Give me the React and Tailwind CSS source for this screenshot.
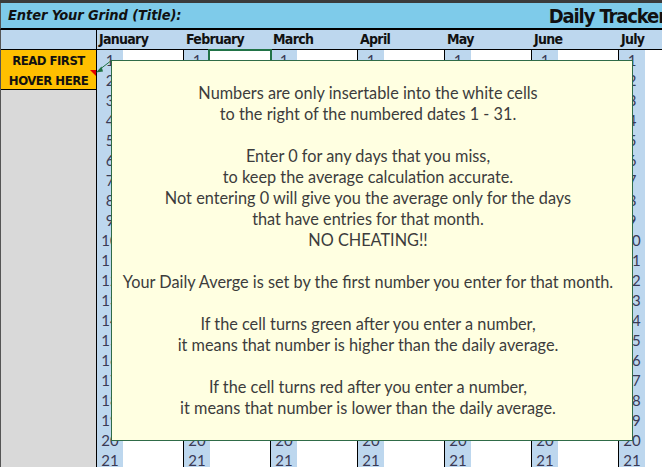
import React from 'react';

const months = ['January', 'February', 'March', 'April', 'May', 'June', 'July'];
const days = Array.from({ length: 31 }, (_, i) => i + 1);

const condensed = { fontFamily: '"DejaVu Sans Condensed", "Liberation Sans", sans-serif' };

function MonthColumn({ name, first }) {
  return (
    <div className={`flex flex-col shrink-0 ${first ? 'w-[86px]' : 'w-[87px]'}`}>
      <div
        className={`h-[20px] bg-[#bdd7ee] border-b border-black text-[14px] font-bold leading-[19px] text-[#111] tracking-[-0.7px] ${first ? 'pl-[2px]' : 'pl-[3px]'}`}
        style={condensed}
      >
        {name}
      </div>
      <div className={`flex flex-col ${first ? '' : 'border-l border-black'}`}>
        {days.map((d) => (
          <div key={d} className="flex h-[20px] shrink-0">
            <div className="w-[26px] bg-[#bdd7ee] text-center text-[15px] leading-[20px] text-[#3a3a55]">
              {d}
            </div>
            <div className="flex-1 bg-white" />
          </div>
        ))}
      </div>
    </div>
  );
}

export default function App() {
  const lines = [
    'Numbers are only insertable into the white cells',
    'to the right of the numbered dates 1 - 31.',
    '',
    'Enter 0 for any days that you miss,',
    'to keep the average calculation accurate.',
    'Not entering 0 will give you the average only for the days',
    'that have entries for that month.',
    'NO CHEATING!!',
    '',
    'Your Daily Averge is set by the first number you enter for that month.',
    '',
    'If the cell turns green after you enter a number,',
    'it means that number is higher than the daily average.',
    '',
    'If the cell turns red after you enter a number,',
    'it means that number is lower than the daily average.',
  ];

  return (
    <div
      className="relative w-[662px] h-[467px] overflow-hidden bg-white"
      style={{ fontFamily: 'Lato, "Open Sans", sans-serif' }}
    >
      {/* top strip */}
      <div className="h-[3px] bg-[#3b3b3b]" />

      {/* title bar */}
      <div className="h-[27px] bg-[#7ecbea] border-b-2 border-black border-l border-l-[#555] flex items-center justify-between overflow-hidden whitespace-nowrap">
        <div className="pl-[7px] text-[14.5px] font-bold italic text-[#111] tracking-[-0.1px]" style={condensed}>
          Enter Your Grind (Title):
        </div>
        <div className="text-[20px] font-bold text-[#111] mr-[-4px] tracking-[-1.1px]" style={condensed}>
          Daily Tracker
        </div>
      </div>

      {/* grid */}
      <div className="flex">
        <div className="w-[97px] shrink-0 border-r border-black border-l border-l-[#555] flex flex-col h-[440px]">
          <div className="h-[20px] bg-[#bdd7ee] border-b border-black" />
          <div className="h-[40px] bg-[#ffc000] border-b border-black flex flex-col items-center text-[13px] font-bold text-[#111] tracking-[-0.5px] pt-[1px]" style={condensed}>
            <div className="h-[20px] leading-[20px]">READ FIRST</div>
            <div className="h-[19px] leading-[19px]">HOVER HERE</div>
          </div>
          <div className="flex-1 bg-[#d9d9d9]" />
        </div>
        {months.map((m, i) => (
          <MonthColumn key={m} name={m} first={i === 0} />
        ))}
      </div>

      {/* selected cell outline */}
      <div className="absolute left-[208px] top-[49px] w-[64px] h-[23px] border-2 border-[#217346]" />

      {/* comment arrow and indicator */}
      <svg className="absolute left-0 top-0" width="662" height="467" viewBox="0 0 662 467">
        <polygon points="90,70 96,70 96,76" fill="#e00000" />
        <line x1="112" y1="60" x2="99" y2="70" stroke="#217346" strokeWidth="1" />
        <polygon points="96,72.5 101.5,66.5 103,71.5" fill="#217346" />
      </svg>

      {/* comment box */}
      <div className="absolute left-[111px] top-[60px] w-[522px] h-[381px] bg-[#ffffe1] border border-[#2f6b47] pt-[21px] pr-[8px] text-center text-[16.3px] leading-[21px] text-[#3c3c3c]">
        {lines.map((l, i) => (
          <div key={i} className="h-[21px] whitespace-nowrap">
            {l}
          </div>
        ))}
      </div>
    </div>
  );
}
